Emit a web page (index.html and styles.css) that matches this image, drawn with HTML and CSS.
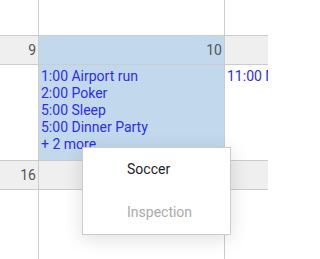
FILE: index.html
```html
<!DOCTYPE html>
<html>
<head>
<meta charset="utf-8">
<link rel="stylesheet" href="styles.css">
</head>
<body>
<div class="cal">
  <div class="row top">
    <div class="cell c0"></div>
    <div class="cell c1"></div>
    <div class="cell c2"></div>
  </div>
  <div class="row week">
    <div class="cell c0">
      <div class="num">9</div>
      <div class="events"></div>
    </div>
    <div class="cell c1 selected">
      <div class="num">10</div>
      <div class="events">
        <div class="ev">1:00 Airport run</div>
        <div class="ev">2:00 Poker</div>
        <div class="ev">5:00 Sleep</div>
        <div class="ev">5:00 Dinner Party</div>
        <div class="ev">+ 2 more</div>
      </div>
    </div>
    <div class="cell c2">
      <div class="num"></div>
      <div class="events">
        <div class="ev">11:00 Meeting</div>
      </div>
    </div>
  </div>
  <div class="row week last">
    <div class="cell c0">
      <div class="num">16</div>
      <div class="events"></div>
    </div>
    <div class="cell c1">
      <div class="num">17</div>
      <div class="events"></div>
    </div>
    <div class="cell c2">
      <div class="num"></div>
      <div class="events"></div>
    </div>
  </div>
</div>
<div class="menu">
  <div class="item">Soccer</div>
  <div class="item disabled">Inspection</div>
</div>
</body>
</html>
```

FILE: styles.css
```css
html, body {
  margin: 0;
  padding: 0;
  background: #fff;
  font-family: Roboto, "Liberation Sans", sans-serif;
}
body {
  width: 268px;
  height: 259px;
  overflow: hidden;
  position: relative;
}
.cal {
  display: flex;
  flex-direction: column;
  width: 268px;
  height: 259px;
  overflow: hidden;
}
.row {
  display: flex;
  flex-shrink: 0;
}
.cell {
  border-right: 1px solid #cccccc;
  border-bottom: 1px solid #cccccc;
  overflow: hidden;
  flex-shrink: 0;
}
.c0 { width: 38px; }
.c1 { width: 185px; }
.c2 { width: 43px; border-right: none; }
.top .cell { height: 35px; }
.num {
  height: 28px;
  line-height: 28px;
  background: #efefef;
  border-bottom: 1px solid #cccccc;
  text-align: right;
  padding-right: 2px;
  font-size: 14px;
  color: #555555;
}
.events {
  height: 95px;
  padding: 3px 0 0 2px;
  box-sizing: border-box;
}
.last .events {
  height: 69px;
}
.ev {
  font-size: 14px;
  line-height: 17px;
  color: #2d2df0;
  white-space: nowrap;
  overflow: hidden;
}
.selected {
  background: #c2d8ec;
}
.selected .num {
  background: transparent;
  border-bottom-color: #c6cfd8;
}
.menu {
  position: absolute;
  left: 82px;
  top: 147px;
  width: 147px;
  background: #fff;
  border: 1px solid #cccccc;
  box-shadow: 0 4px 18px rgba(0, 0, 0, 0.13);
}
.item {
  height: 43px;
  line-height: 43px;
  padding-left: 44px;
  font-size: 14px;
  color: #222222;
}
.item.disabled {
  color: #aaaaaa;
}
```
